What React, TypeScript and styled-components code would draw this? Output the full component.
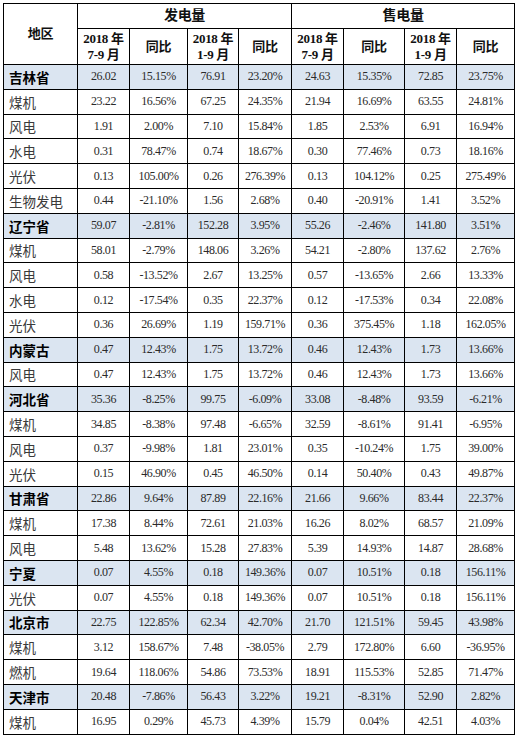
import React from 'react';
import styled, { createGlobalStyle } from 'styled-components';

const GlobalStyle = createGlobalStyle`
    body {
        margin: 0;
        padding: 3px 0 0 3px;
        background: #ffffff;
    }
`;

const Table = styled.table`
    border-collapse: collapse;
    table-layout: fixed;
    width: 511px;
    font-family: 'Liberation Serif', 'Noto Sans CJK SC', serif;
    color: #111;
    td,
    th {
        border: 1px solid #000;
        padding: 0;
        text-align: center;
        white-space: nowrap;
    }
`;

const HeadCell = styled.th`
    font-family: 'Liberation Serif', 'Noto Sans CJK SC', serif;
    font-weight: bold;
    font-size: 13px;
    line-height: 16px;
    letter-spacing: -0.3px;
`;

const GroupCell = styled(HeadCell)`
    height: 24px;
    font-size: 14px;
`;

const SubCell = styled(HeadCell)`
    height: 35px;
`;

const Row = styled.tr<{ $prov?: boolean }>`
    height: 24.8px;
    background: ${(p) => (p.$prov ? '#dbe5f1' : '#ffffff')};
`;

const NameCell = styled.td<{ $prov?: boolean }>`
    && {
        text-align: left;
        padding-left: 5px;
    }
    font-family: 'Noto Sans CJK SC', sans-serif;
    font-size: 13.5px;
    font-weight: ${(p) => (p.$prov ? 700 : 400)};
    color: ${(p) => (p.$prov ? '#000' : '#3a3a3a')};
`;

const NumCell = styled.td`
    font-size: 12px;
    letter-spacing: -0.4px;
    color: #2a2a2a;
`;

type R = [string, boolean, string, string, string, string, string, string, string, string];

const rows: R[] = [
    ['吉林省', true, '26.02', '15.15%', '76.91', '23.20%', '24.63', '15.35%', '72.85', '23.75%'],
    ['煤机', false, '23.22', '16.56%', '67.25', '24.35%', '21.94', '16.69%', '63.55', '24.81%'],
    ['风电', false, '1.91', '2.00%', '7.10', '15.84%', '1.85', '2.53%', '6.91', '16.94%'],
    ['水电', false, '0.31', '78.47%', '0.74', '18.67%', '0.30', '77.46%', '0.73', '18.16%'],
    ['光伏', false, '0.13', '105.00%', '0.26', '276.39%', '0.13', '104.12%', '0.25', '275.49%'],
    ['生物发电', false, '0.44', '-21.10%', '1.56', '2.68%', '0.40', '-20.91%', '1.41', '3.52%'],
    ['辽宁省', true, '59.07', '-2.81%', '152.28', '3.95%', '55.26', '-2.46%', '141.80', '3.51%'],
    ['煤机', false, '58.01', '-2.79%', '148.06', '3.26%', '54.21', '-2.80%', '137.62', '2.76%'],
    ['风电', false, '0.58', '-13.52%', '2.67', '13.25%', '0.57', '-13.65%', '2.66', '13.33%'],
    ['水电', false, '0.12', '-17.54%', '0.35', '22.37%', '0.12', '-17.53%', '0.34', '22.08%'],
    ['光伏', false, '0.36', '26.69%', '1.19', '159.71%', '0.36', '375.45%', '1.18', '162.05%'],
    ['内蒙古', true, '0.47', '12.43%', '1.75', '13.72%', '0.46', '12.43%', '1.73', '13.66%'],
    ['风电', false, '0.47', '12.43%', '1.75', '13.72%', '0.46', '12.43%', '1.73', '13.66%'],
    ['河北省', true, '35.36', '-8.25%', '99.75', '-6.09%', '33.08', '-8.48%', '93.59', '-6.21%'],
    ['煤机', false, '34.85', '-8.38%', '97.48', '-6.65%', '32.59', '-8.61%', '91.41', '-6.95%'],
    ['风电', false, '0.37', '-9.98%', '1.81', '23.01%', '0.35', '-10.24%', '1.75', '39.00%'],
    ['光伏', false, '0.15', '46.90%', '0.45', '46.50%', '0.14', '50.40%', '0.43', '49.87%'],
    ['甘肃省', true, '22.86', '9.64%', '87.89', '22.16%', '21.66', '9.66%', '83.44', '22.37%'],
    ['煤机', false, '17.38', '8.44%', '72.61', '21.03%', '16.26', '8.02%', '68.57', '21.09%'],
    ['风电', false, '5.48', '13.62%', '15.28', '27.83%', '5.39', '14.93%', '14.87', '28.68%'],
    ['宁夏', true, '0.07', '4.55%', '0.18', '149.36%', '0.07', '10.51%', '0.18', '156.11%'],
    ['光伏', false, '0.07', '4.55%', '0.18', '149.36%', '0.07', '10.51%', '0.18', '156.11%'],
    ['北京市', true, '22.75', '122.85%', '62.34', '42.70%', '21.70', '121.51%', '59.45', '43.98%'],
    ['煤机', false, '3.12', '158.67%', '7.48', '-38.05%', '2.79', '172.80%', '6.60', '-36.95%'],
    ['燃机', false, '19.64', '118.06%', '54.86', '73.53%', '18.91', '115.53%', '52.85', '71.47%'],
    ['天津市', true, '20.48', '-7.86%', '56.43', '3.22%', '19.21', '-8.31%', '52.90', '2.82%'],
    ['煤机', false, '16.95', '0.29%', '45.73', '4.39%', '15.79', '0.04%', '42.51', '4.03%'],
];

const widths = [74, 52, 58, 51, 53, 52, 61, 52, 58];

const Period = ({ range }: { range: string }) => (
    <SubCell>
        2018 年<br />
        {range} 月
    </SubCell>
);

export default function App() {
    return (
        <>
            <GlobalStyle />
            <Table>
                <colgroup>
                    {widths.map((w, i) => (
                        <col key={i} style={{ width: w }} />
                    ))}
                </colgroup>
                <thead>
                    <tr>
                        <HeadCell rowSpan={2}>地区</HeadCell>
                        <GroupCell colSpan={4}>发电量</GroupCell>
                        <GroupCell colSpan={4}>售电量</GroupCell>
                    </tr>
                    <tr>
                        <Period range="7-9" />
                        <SubCell>同比</SubCell>
                        <Period range="1-9" />
                        <SubCell>同比</SubCell>
                        <Period range="7-9" />
                        <SubCell>同比</SubCell>
                        <Period range="1-9" />
                        <SubCell>同比</SubCell>
                    </tr>
                </thead>
                <tbody>
                    {rows.map(([name, prov, ...vals], i) => (
                        <Row key={i} $prov={prov}>
                            <NameCell $prov={prov}>{name}</NameCell>
                            {vals.map((v, j) => (
                                <NumCell key={j}>{v}</NumCell>
                            ))}
                        </Row>
                    ))}
                </tbody>
            </Table>
        </>
    );
}
